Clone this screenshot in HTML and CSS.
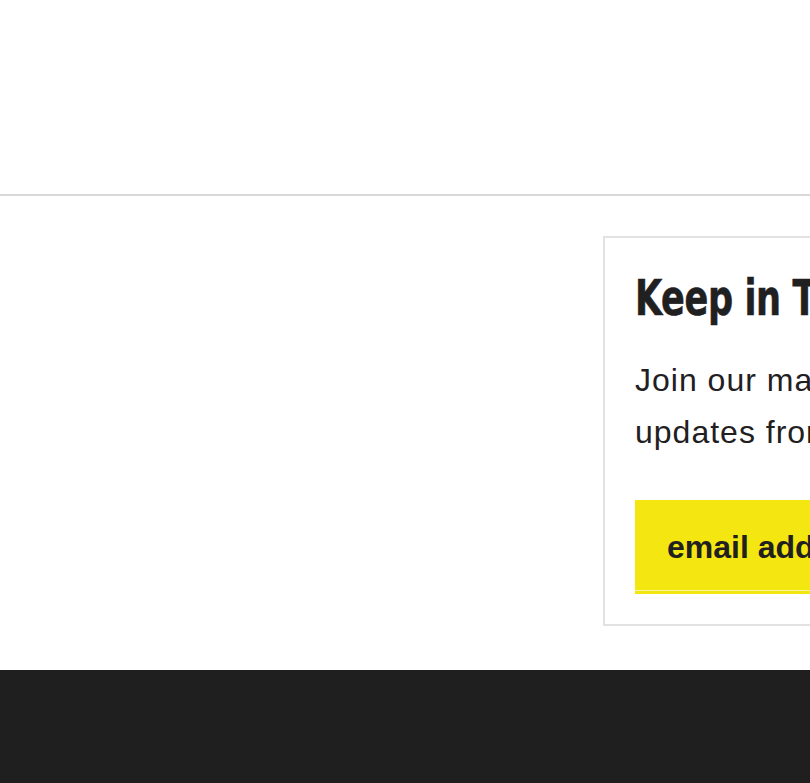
FILE: index.html
```html
<!DOCTYPE html>
<html lang="en">
<head>
<meta charset="utf-8">
<title>Keep in Touch</title>
<link rel="stylesheet" href="styles.css">
</head>
<body>
<header class="site-header"></header>
<main class="content">
  <div class="main-col"></div>
  <aside class="signup">
    <h2 class="signup-title">Keep in Touch</h2>
    <p class="signup-text">Join our mailing list for updates from the studio.</p>
    <div class="signup-field">email address</div>
  </aside>
</main>
<footer class="site-footer"></footer>
</body>
</html>
```
FILE: styles.css
```css
html, body {
  margin: 0;
  padding: 0;
  background: #ffffff;
  overflow: hidden;
}
body {
  width: 810px;
  height: 783px;
  display: flex;
  flex-direction: column;
  font-family: "Liberation Sans", Arial, sans-serif;
  color: #1f201f;
}
.site-header {
  height: 194px;
  border-bottom: 2px solid #d9d9d9;
  flex: none;
}
.content {
  display: flex;
  padding: 40px 0 44px;
  flex: none;
}
.main-col {
  flex: 0 0 603px;
}
.signup {
  flex: 0 0 480px;
  border: 2px solid #e2e2e2;
  padding: 30px 30px 30px 30px;
  box-sizing: border-box;
  height: 390px;
}
.signup-title {
  margin: 0;
  font-family: "DejaVu Sans", sans-serif;
  font-stretch: condensed;
  font-weight: 700;
  font-size: 50px;
  line-height: 60px;
  white-space: nowrap;
  transform: scaleX(0.78);
  transform-origin: left center;
  letter-spacing: -0.5px;
  -webkit-text-stroke: 0.6px #1f201f;
}
.signup-text {
  margin: 26px 0 0;
  font-size: 32px;
  line-height: 52px;
  letter-spacing: 1px;
  width: 400px;
}
.signup-field {
  margin-top: 42px;
  background: #f4e711;
  height: 91px;
  border-bottom: 3px solid #f4e711;
  box-shadow: inset 0 -1px 0 #fff3a0;
  padding-left: 32px;
  font-size: 32px;
  font-weight: 700;
  line-height: 94px;
  white-space: nowrap;
}
.site-footer {
  flex: 1;
  background: #1e1f1e;
}
```
